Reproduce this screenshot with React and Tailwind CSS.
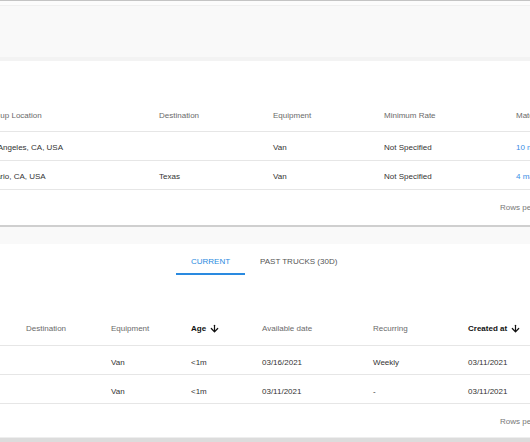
import React from 'react'
import { ArrowDown } from 'lucide-react'

const font = { fontFamily: '"Liberation Sans", Arial, sans-serif' }

// table 1 columns (first one is partly scrolled out of view)
const cols1 = ['w-[176px]', 'w-[114px]', 'w-[111px]', 'w-[132px]', 'w-[60px]']
const cols2 = ['w-[26px]', 'w-[85px]', 'w-[80px]', 'w-[71px]', 'w-[111px]', 'w-[95px]', 'w-[80px]']

const SortHead = ({ label }) => (
  <span className="flex items-center gap-[3px] font-bold text-[#111]">
    {label}
    <ArrowDown size={11} strokeWidth={2.6} />
  </span>
)

const Row1 = ({ cells, header }) => (
  <div
    className={`flex items-center -ml-[17px] ${header ? 'h-[34px] pt-[2px] text-[#6a6a6a]' : 'h-[29px] pt-[4px] text-[#333]'} border-b border-[#e6e6e6]`}
  >
    {cells.map((c, i) => (
      <div key={i} className={`${cols1[i]} shrink-0 whitespace-nowrap ${i === 4 && !header ? 'text-[#3a8ee6]' : ''}`}>
        {c}
      </div>
    ))}
  </div>
)

const Row2 = ({ cells, header }) => (
  <div
    className={`flex items-center ${header ? 'h-[36px] pt-[2px] text-[#6a6a6a]' : 'h-[29px] pt-[5px] text-[#333]'} border-b border-[#e6e6e6]`}
  >
    {cells.map((c, i) => (
      <div key={i} className={`${cols2[i]} shrink-0 whitespace-nowrap`}>
        {c}
      </div>
    ))}
  </div>
)

export default function App() {
  return (
    <div className="w-[530px] h-[442px] overflow-hidden bg-white text-[8px]" style={font}>
      {/* top grey panel */}
      <div className="h-[61px] bg-[#f9f9f9] border-t border-[#c4c4c4] border-b-4 border-b-[#f3f3f3]">
        <div className="h-[5px] bg-[#fcfcfc] border-b border-[#f0f0f0]" />
      </div>

      {/* first card */}
      <div className="bg-white border-b-2 border-[#cfcfcf]">
        <div className="h-[37px]" />
        <Row1 header cells={['Pick up Location', 'Destination', 'Equipment', 'Minimum Rate', 'Matches']} />
        <Row1 cells={['Los Angeles, CA, USA', '', 'Van', 'Not Specified', '10 matches']} />
        <Row1 cells={['Ontario, CA, USA', 'Texas', 'Van', 'Not Specified', '4 matches']} />
        <div className="h-[35px] pt-[1px] flex items-center justify-end text-[#777]">
          <span className="w-[30px] whitespace-nowrap">Rows per page</span>
        </div>
      </div>

      <div className="h-[17px] bg-[#f9f9f9]" />

      {/* second card */}
      <div className="bg-white border-b-[4px] border-[#dcdcdc]">
        <div className="flex h-[31px] pl-[176px]">
          <div className="w-[69px] flex flex-col">
            <div className="h-[29px] pt-[6px] flex items-center justify-center text-[#2a8ae0]">CURRENT</div>
            <div className="h-[2px] bg-[#2a8ae0]" />
          </div>
          <div className="ml-[15px] h-[29px] pt-[6px] flex items-center text-[#555]">PAST TRUCKS (30D)</div>
        </div>
        <div className="h-[35px]" />
        <Row2
          header
          cells={['', 'Destination', 'Equipment', <SortHead label="Age" />, 'Available date', 'Recurring', <SortHead label="Created at" />]}
        />
        <Row2 cells={['', '', 'Van', '<1m', '03/16/2021', 'Weekly', '03/11/2021']} />
        <Row2 cells={['', '', 'Van', '<1m', '03/11/2021', '-', '03/11/2021']} />
        <div className="h-[34px] pt-[3px] flex items-center justify-end text-[#777] border-b border-[#eeeeee]">
          <span className="w-[30px] whitespace-nowrap">Rows per page</span>
        </div>
      </div>
    </div>
  )
}
